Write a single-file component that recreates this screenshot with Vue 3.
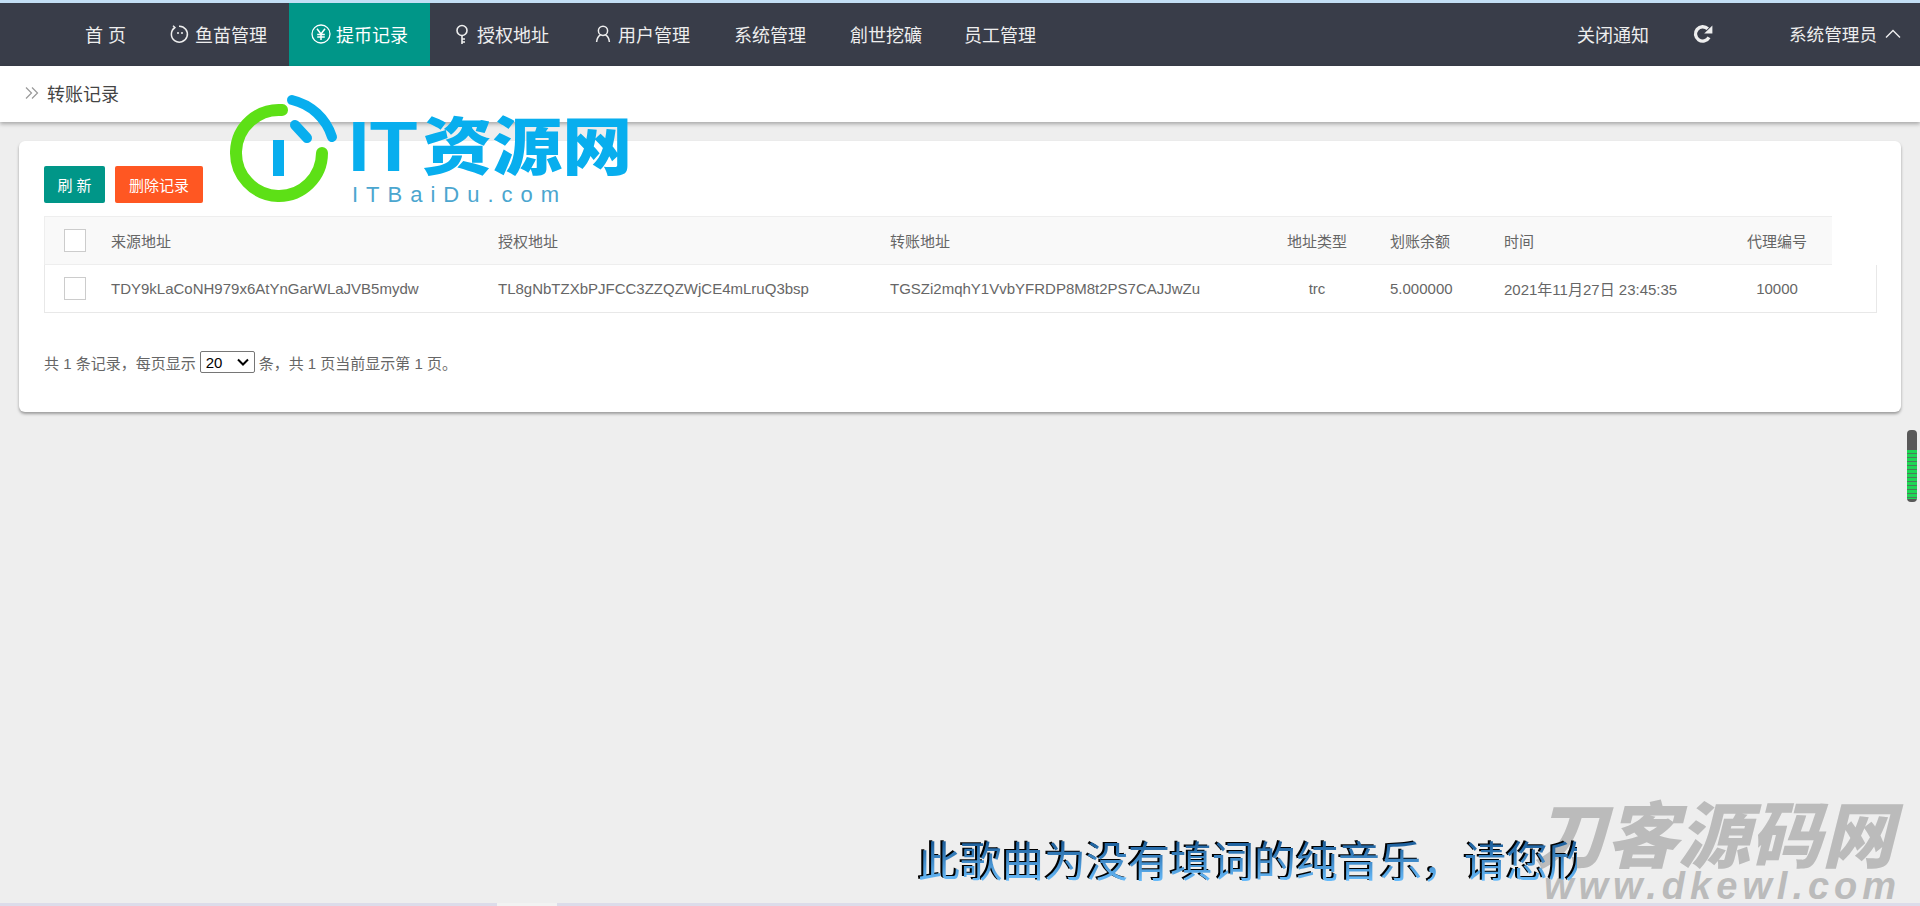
<script setup>
const navItems = [
  { label: '首 页' },
  { label: '鱼苗管理', icon: 'fish' },
  { label: '提币记录', icon: 'yen', active: true },
  { label: '授权地址', icon: 'key' },
  { label: '用户管理', icon: 'user' },
  { label: '系统管理' },
  { label: '創世挖礦' },
  { label: '员工管理' },
]

const record = {
  from: 'TDY9kLaCoNH979x6AtYnGarWLaJVB5mydw',
  auth: 'TL8gNbTZXbPJFCC3ZZQZWjCE4mLruQ3bsp',
  to: 'TGSZi2mqhY1VvbYFRDP8M8t2PS7CAJJwZu',
  type: 'trc',
  amount: '5.000000',
  time: '2021年11月27日 23:45:35',
  agent: '10000',
}
</script>

<template>
  <div class="page">
    <header class="topbar">
      <nav class="nav">
        <a
          v-for="item in navItems"
          :key="item.label"
          class="nav-item"
          :class="{ active: item.active }"
        >
          <svg v-if="item.icon === 'fish'" class="nav-icon" viewBox="0 0 20 20">
            <path d="M5 3.5 A8 8 0 1 0 9 2.2 M3 1.8 L5.5 4" fill="none" stroke="currentColor" stroke-width="1.5" />
            <circle cx="8" cy="9" r="1" fill="currentColor" />
            <circle cx="12" cy="9" r="1" fill="currentColor" />
          </svg>
          <svg v-else-if="item.icon === 'yen'" class="nav-icon" viewBox="0 0 20 20">
            <circle cx="10" cy="10" r="9" fill="none" stroke="currentColor" stroke-width="1.3" />
            <path d="M6 4.8 L10 10 L14 4.8 M10 10 V16 M6.2 10.4 H13.8 M6.2 13 H13.8" fill="none" stroke="currentColor" stroke-width="1.5" />
          </svg>
          <svg v-else-if="item.icon === 'key'" class="nav-icon" viewBox="0 0 20 20">
            <circle cx="10" cy="6.5" r="5" fill="none" stroke="currentColor" stroke-width="1.6" />
            <path d="M10 11.5 V20 M10 15 H13 M10 18 H13" fill="none" stroke="currentColor" stroke-width="1.6" />
          </svg>
          <svg v-else-if="item.icon === 'user'" class="nav-icon" viewBox="0 0 20 20">
            <circle cx="10" cy="6.8" r="4.6" fill="none" stroke="currentColor" stroke-width="1.5" />
            <path d="M3.6 18 C4 14 6 11.6 7.6 11 M16.4 18 C16 14 14 11.6 12.4 11" fill="none" stroke="currentColor" stroke-width="1.5" />
          </svg>
          <span>{{ item.label }}</span>
        </a>
      </nav>
      <div class="nav-right">
        <a class="nav-item">关闭通知</a>
        <a class="nav-item refresh">
          <svg viewBox="0 0 20 20" width="20" height="20">
            <path d="M16 13.4 A7.2 7.2 0 1 1 14.8 4.8" fill="none" stroke="currentColor" stroke-width="3.4" />
            <path d="M19.4 1.4 V9.6 H11.2 Z" fill="currentColor" />
          </svg>
        </a>
        <a class="nav-item user-menu">
          <span>系统管理员</span>
          <svg viewBox="0 0 16 10" width="16" height="10">
            <path d="M1 8.5 L8 1.5 L15 8.5" fill="none" stroke="currentColor" stroke-width="1.4" />
          </svg>
        </a>
      </div>
    </header>

    <div class="crumb">
      <svg viewBox="0 0 14 14" width="14" height="14">
        <path d="M1 1.5 L6.5 7 L1 12.5 M7 1.5 L12.5 7 L7 12.5" fill="none" stroke="#999" stroke-width="1.2" />
      </svg>
      <span>转账记录</span>
    </div>

    <main class="card">
      <div class="actions">
        <button class="btn green">刷 新</button>
        <button class="btn orange">删除记录</button>
      </div>

      <div class="table">
        <div class="row head">
          <div class="cell"><i class="check"></i></div>
          <div class="cell">来源地址</div>
          <div class="cell">授权地址</div>
          <div class="cell">转账地址</div>
          <div class="cell center">地址类型</div>
          <div class="cell">划账余额</div>
          <div class="cell">时间</div>
          <div class="cell center">代理编号</div>
        </div>
        <div class="row body">
          <div class="cell"><i class="check"></i></div>
          <div class="cell">{{ record.from }}</div>
          <div class="cell">{{ record.auth }}</div>
          <div class="cell">{{ record.to }}</div>
          <div class="cell center">{{ record.type }}</div>
          <div class="cell">{{ record.amount }}</div>
          <div class="cell">{{ record.time }}</div>
          <div class="cell center">{{ record.agent }}</div>
        </div>
      </div>

      <div class="pager">
        <span>共 1 条记录，每页显示</span>
        <div class="size-wrap">
          <select class="size">
            <option>20</option>
            <option>50</option>
            <option>100</option>
          </select>
          <svg class="size-arrow" viewBox="0 0 12 8" width="12" height="8">
            <path d="M1 1.5 L6 6.5 L11 1.5" fill="none" stroke="#000" stroke-width="2" />
          </svg>
        </div>
        <span>条，共 1 页当前显示第 1 页。</span>
      </div>
    </main>

    <!-- things lying over the page -->
    <div class="logo">
      <svg class="logo-mark" viewBox="0 0 115 110" width="115" height="110">
        <path d="M56 13 A43 43 0 1 0 96 56" fill="none" stroke="#5de016" stroke-width="12" stroke-linecap="round" />
        <path d="M66 3 A55 55 0 0 1 106 40" fill="none" stroke="#08aeee" stroke-width="10" stroke-linecap="round" />
        <path d="M69 28 L81 41" fill="none" stroke="#08aeee" stroke-width="10" stroke-linecap="round" />
        <path d="M47 43 H58 V79 H47 Z" fill="#08aeee" />
      </svg>
      <div class="logo-text">
        <div class="logo-name"><span class="logo-it">IT</span>资源网</div>
        <div class="logo-sub">ITBaiDu.com</div>
      </div>
    </div>

    <div class="mark">
      <div class="mark-cn">刀客源码网</div>
      <div class="mark-en">www.dkewl.com</div>
    </div>

    <div class="lyric"><div class="lyric-text">此歌曲为没有填词的纯音乐，请您欣赏</div></div>

    <div class="meter"><div class="meter-bars"></div></div>

    <div class="bottom-strip"><span></span></div>
  </div>
</template>

<style>
html,
body {
  margin: 0;
  overflow: hidden;
  background: #eeeeee;
}
</style>

<style scoped>
.page {
  position: relative;
  height: 906px;
  padding-top: 3px;
  box-sizing: border-box;
  background: #eeeeee;
  overflow: hidden;
  font-family: "Liberation Sans", "Noto Sans CJK SC", sans-serif;
  color: #666;
}

.page::before {
  content: "";
  position: absolute;
  left: 0;
  top: 0;
  right: 0;
  height: 3px;
  background: #c3dff5;
}

.topbar {
  display: flex;
  justify-content: space-between;
  height: 63px;
  padding-left: 63px;
  background: #393d49;
}

.nav,
.nav-right {
  display: flex;
}

.nav-item {
  display: flex;
  align-items: center;
  box-sizing: border-box;
  padding: 0 22px 2px;
  font-size: 18px;
  color: #eeeeee;
  white-space: nowrap;
}

.nav .nav-item:last-child {
  margin-left: -2px;
}

.nav-item.active {
  background: #009688;
  color: #fff;
}

.nav-icon {
  width: 20px;
  height: 20px;
  margin-right: 5px;
  flex: none;
}

.refresh {
  color: #eeeeee;
  padding-right: 21px;
}

.user-menu {
  gap: 8px;
  padding: 0 19px 2px 55px;
  font-size: 17.6px;
}

.crumb {
  position: relative;
  display: flex;
  align-items: center;
  gap: 8px;
  height: 56px;
  padding: 0 0 2px 25px;
  box-sizing: border-box;
  background: #fff;
  box-shadow: 0 2px 4px rgba(0, 0, 0, 0.3);
  font-size: 18px;
  color: #444;
}

.card {
  width: 1882px;
  height: 271px;
  margin: 19px 0 0 19px;
  padding: 25px 0 0 25px;
  box-sizing: border-box;
  background: #fff;
  border-radius: 6px;
  box-shadow: 0 2px 3px rgba(0, 0, 0, 0.35);
}

.actions {
  display: flex;
  gap: 10px;
  margin-bottom: 13px;
}

.btn {
  height: 37px;
  padding: 0;
  border: 0;
  border-radius: 2px;
  font-family: inherit;
  font-size: 15px;
  color: #fff;
}

.btn.green {
  width: 61px;
  background: #009688;
}

.btn.orange {
  width: 88px;
  background: #ff5722;
}

.row {
  display: grid;
  grid-template-columns: 57px 387px 392px 374px 126px 114px 228px 110px;
  box-sizing: border-box;
  height: 48px;
  font-size: 15px;
  color: #666;
}

.row.head {
  width: 1788px;
  height: 49px;
  background: #f9f9f9;
  border-top: 1px solid #eeeeee;
  border-left: 1px solid #eeeeee;
  border-bottom: 1px solid #eeeeee;
}

.row.body {
  width: 1833px;
  border-left: 1px solid #e8e8e8;
  border-right: 1px solid #e8e8e8;
  border-bottom: 1px solid #e8e8e8;
}

.cell {
  display: flex;
  align-items: center;
  padding-left: 9px;
  white-space: nowrap;
}

.cell:first-child {
  padding-left: 19px;
}

.cell.center {
  justify-content: center;
  padding: 0 2px 0 0;
}

.check {
  display: block;
  width: 20px;
  height: 21px;
  border: 1px solid #cccccc;
  background: #fff;
}

.pager {
  display: flex;
  align-items: center;
  gap: 4px;
  margin-top: 38px;
  font-size: 15px;
  color: #666;
}

.size-wrap {
  position: relative;
  display: flex;
}

.size {
  appearance: none;
  width: 55px;
  height: 22px;
  padding: 0 0 0 5px;
  font-family: inherit;
  font-size: 15px;
  color: #000;
  background: #fff;
  border: 1px solid #767676;
  border-radius: 2px;
}

.size-arrow {
  position: absolute;
  right: 6px;
  top: 7px;
  pointer-events: none;
}

.logo {
  position: absolute;
  left: 226px;
  top: 97px;
  display: flex;
  gap: 9px;
}

.logo-mark {
  flex: none;
  overflow: visible;
}

.logo-text {
  padding-top: 14px;
}

.logo-name {
  display: flex;
  align-items: center;
  height: 72px;
  margin-left: -2px;
  font-size: 70px;
  line-height: 72px;
  font-weight: 900;
  color: #08aeee;
  white-space: nowrap;
  transform: scaleY(0.9);
}

.logo-it {
  font-size: 78px;
  margin-right: 5px;
}

.logo-sub {
  margin: -1px 0 0 2px;
  font-size: 22px;
  letter-spacing: 8px;
  color: #4ba6cf;
  white-space: nowrap;
}

.lyric {
  position: absolute;
  left: 918px;
  top: 834px;
  width: 659px;
  height: 58px;
  overflow: hidden;
}

.lyric-text {
  width: 760px;
  font-size: 42px;
  line-height: 58px;
  white-space: nowrap;
  background: linear-gradient(#1d5f9c 15%, #6cc0ff 85%);
  -webkit-background-clip: text;
  background-clip: text;
  color: transparent;
  filter: drop-shadow(-1.5px -1px 0.6px #000);
}

.mark {
  position: absolute;
  left: 1534px;
  top: 802px;
  width: 380px;
  color: #bbbbbb;
  font-weight: 700;
  font-style: italic;
  white-space: nowrap;
}

.mark-cn {
  font-size: 72px;
  line-height: 70px;
  font-weight: 900;
}

.mark-en {
  margin: -3px 0 0 10px;
  font-size: 38px;
  line-height: 34px;
  letter-spacing: 5px;
}

.meter {
  position: absolute;
  left: 1907px;
  top: 430px;
  width: 10px;
  height: 72px;
  box-sizing: border-box;
  padding: 20px 0 3px;
  background: #595959;
  border-radius: 4px;
}

.meter-bars {
  height: 100%;
  background: repeating-linear-gradient(#1fd655 0 3px, #4d7a5c 3px 4px);
}

.bottom-strip {
  position: absolute;
  left: 0;
  right: 0;
  bottom: 0;
  height: 3px;
  background: #dcdcea;
}

.bottom-strip span {
  display: block;
  width: 60px;
  height: 3px;
  margin-left: 497px;
  background: #f2f2f2;
}
</style>
